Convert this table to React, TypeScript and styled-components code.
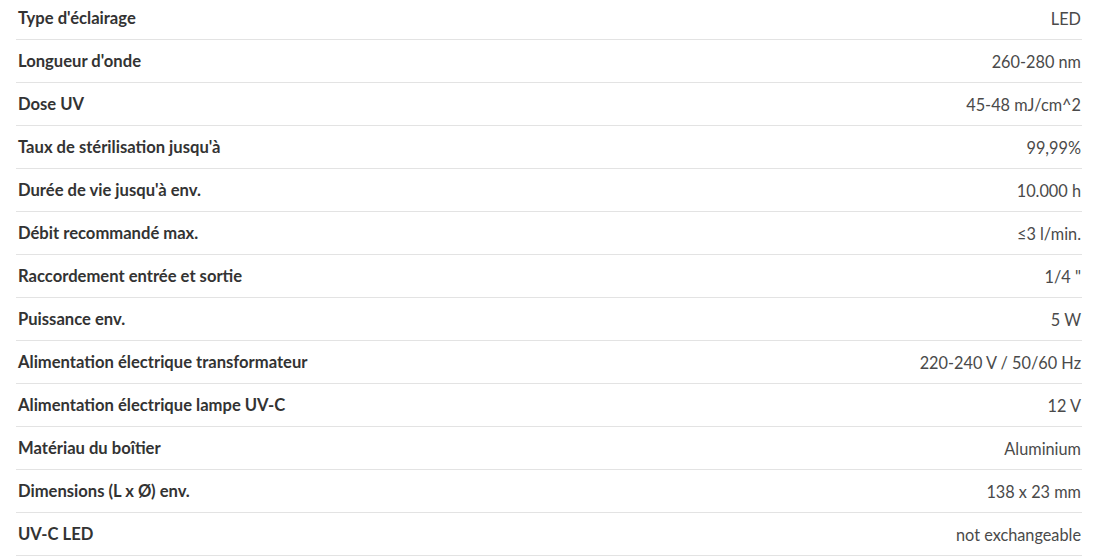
import React from "react";
import styled, { createGlobalStyle } from "styled-components";

const GlobalStyle = createGlobalStyle`
  html, body {
    margin: 0;
    padding: 0;
    background: #fff;
  }
  body {
    font-family: Lato, "Liberation Sans", sans-serif;
    color: #333;
  }
`;

const Wrapper = styled.div`
  padding: 0 21px 0 16px;
  margin-top: -3px;
`;

const Table = styled.table`
  width: 100%;
  border-collapse: collapse;
`;

const Row = styled.tr`
  border-bottom: 1px solid #e3e3e3;
`;

const Label = styled.th`
  text-align: left;
  font-weight: 700;
  font-size: 16.6px;
  color: #333;
  height: 42px;
  padding: 0 0 0 2px;
  vertical-align: middle;
`;

const Value = styled.td`
  text-align: right;
  font-size: 16.3px;
  color: #4a4a4a;
  padding: 0 1px 0 0;
  vertical-align: middle;
`;

const specs: Array<[string, string]> = [
  ["Type d'éclairage", "LED"],
  ["Longueur d'onde", "260-280 nm"],
  ["Dose UV", "45-48 mJ/cm^2"],
  ["Taux de stérilisation jusqu'à", "99,99%"],
  ["Durée de vie jusqu'à env.", "10.000 h"],
  ["Débit recommandé max.", "≤3 l/min."],
  ["Raccordement entrée et sortie", "1/4 \""],
  ["Puissance env.", "5 W"],
  ["Alimentation électrique transformateur", "220-240 V / 50/60 Hz"],
  ["Alimentation électrique lampe UV-C", "12 V"],
  ["Matériau du boîtier", "Aluminium"],
  ["Dimensions (L x Ø) env.", "138 x 23 mm"],
  ["UV-C LED", "not exchangeable"],
];

function App() {
  return (
    <>
      <GlobalStyle />
      <Wrapper>
        <Table>
          <tbody>
            {specs.map(([label, value]) => (
              <Row key={label}>
                <Label>{label}</Label>
                <Value>{value}</Value>
              </Row>
            ))}
          </tbody>
        </Table>
      </Wrapper>
    </>
  );
}

export default App;
